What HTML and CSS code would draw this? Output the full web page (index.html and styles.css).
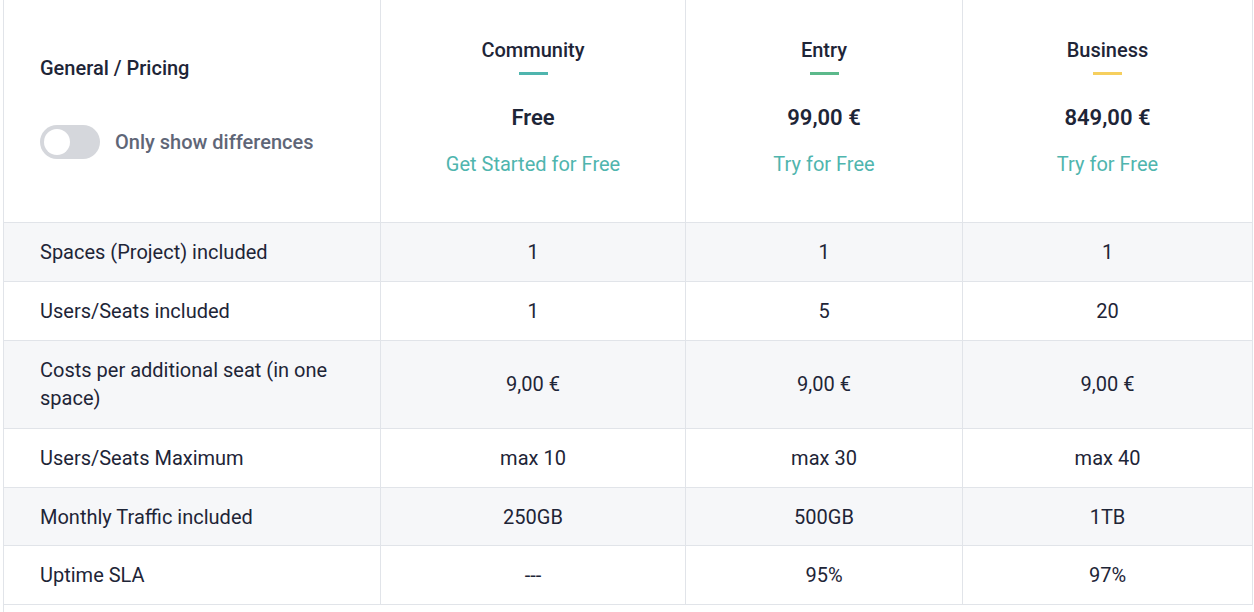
FILE: index.html
```html
<!DOCTYPE html>
<html lang="en">
<head>
<meta charset="utf-8">
<title>Pricing comparison</title>
<link rel="stylesheet" href="styles.css">
</head>
<body>
<table class="pricing">
  <colgroup>
    <col class="c-label">
    <col class="c-community">
    <col class="c-entry">
    <col class="c-business">
  </colgroup>
  <thead>
    <tr class="head-row">
      <th class="head-label">
        <div class="section-title">General / Pricing</div>
        <div class="toggle-row">
          <span class="toggle"><span class="knob"></span></span>
          <span class="toggle-text">Only show differences</span>
        </div>
      </th>
      <th class="plan">
        <div class="plan-name">Community</div>
        <div class="plan-bar bar-teal"></div>
        <div class="plan-price">Free</div>
        <a class="plan-link" href="#">Get Started for Free</a>
      </th>
      <th class="plan">
        <div class="plan-name">Entry</div>
        <div class="plan-bar bar-green"></div>
        <div class="plan-price">99,00 €</div>
        <a class="plan-link" href="#">Try for Free</a>
      </th>
      <th class="plan">
        <div class="plan-name">Business</div>
        <div class="plan-bar bar-yellow"></div>
        <div class="plan-price">849,00 €</div>
        <a class="plan-link" href="#">Try for Free</a>
      </th>
    </tr>
  </thead>
  <tbody>
    <tr class="shade">
      <td class="label">Spaces (Project) included</td>
      <td>1</td><td>1</td><td>1</td>
    </tr>
    <tr>
      <td class="label">Users/Seats included</td>
      <td>1</td><td>5</td><td>20</td>
    </tr>
    <tr class="shade tall">
      <td class="label">Costs per additional seat (in one space)</td>
      <td>9,00 €</td><td>9,00 €</td><td>9,00 €</td>
    </tr>
    <tr>
      <td class="label">Users/Seats Maximum</td>
      <td>max 10</td><td>max 30</td><td>max 40</td>
    </tr>
    <tr class="shade short">
      <td class="label">Monthly Traffic included</td>
      <td>250GB</td><td>500GB</td><td>1TB</td>
    </tr>
    <tr>
      <td class="label">Uptime SLA</td>
      <td>---</td><td>95%</td><td>97%</td>
    </tr>
    <tr class="next">
      <td class="next-cell" colspan="4">&nbsp;</td>
    </tr>
  </tbody>
</table>
</body>
</html>
```
FILE: styles.css
```css
html, body {
  margin: 0;
  padding: 0;
  background: #ffffff;
}
body {
  font-family: Roboto, "Liberation Sans", Arial, sans-serif;
  color: #1e2537;
  overflow: hidden;
}
.pricing {
  margin-left: 3px;
  border-collapse: collapse;
  table-layout: fixed;
  width: 1249px;
}
.c-label { width: 377px; }
.c-community { width: 305px; }
.c-entry { width: 277px; }
.c-business { width: 290px; }

.pricing th,
.pricing td {
  border: 1px solid #e1e4e9;
  font-size: 20px;
  line-height: 28px;
}
.pricing thead th {
  border-top: none;
  vertical-align: top;
  height: 222px;
  padding: 0;
  background: #ffffff;
}
.head-label {
  text-align: left;
  padding-left: 36px !important;
}
.section-title {
  margin-top: 54px;
  font-size: 20px;
  line-height: 28px;
  font-weight: 500;
  color: #1e2537;
}
.toggle-row {
  display: flex;
  align-items: center;
  gap: 15px;
  margin-top: 43px;
}
.toggle {
  width: 60px;
  height: 34px;
  border-radius: 17px;
  background: #d5d7dc;
  display: flex;
  align-items: center;
  padding-left: 4px;
  box-sizing: border-box;
}
.knob {
  width: 26px;
  height: 26px;
  border-radius: 50%;
  background: #ffffff;
}
.toggle-text {
  font-size: 20px;
  font-weight: 500;
  color: #5f6677;
}
.plan {
  text-align: center;
}
.plan-name {
  margin-top: 37px;
  font-size: 20px;
  line-height: 26px;
  font-weight: 500;
  color: #1e2537;
}
.plan-bar {
  width: 29px;
  height: 3px;
  margin: 9px auto 0;
}
.bar-teal { background: #4fb5ae; }
.bar-green { background: #5cb98b; }
.bar-yellow { background: #f6cf5e; }
.plan-price {
  margin-top: 29px;
  font-size: 22px;
  line-height: 28px;
  font-weight: 600;
  color: #1e2537;
}
.plan-link {
  display: block;
  margin-top: 18px;
  font-size: 20px;
  line-height: 28px;
  font-weight: 400;
  color: #4fb5ae;
  text-decoration: none;
}
.pricing tbody td {
  padding: 15px 20px;
  text-align: center;
  vertical-align: middle;
  color: #1e2537;
}
.pricing tbody tr.tall td {
  padding-bottom: 16px;
}
.pricing tbody tr.short td {
  padding-bottom: 14px;
}
.pricing tbody td.label {
  text-align: left;
  padding-left: 36px;
  padding-right: 30px;
}
.pricing tbody tr.shade td {
  background: #f6f7f9;
}
.pricing tbody td.next-cell {
  border-right: none;
  border-bottom: none;
  background: #ffffff;
}
```
